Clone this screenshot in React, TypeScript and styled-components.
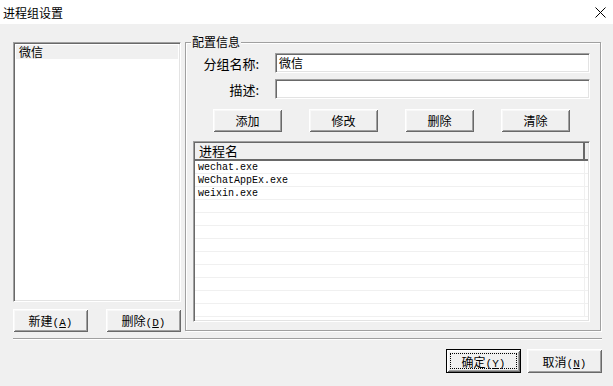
import { FC } from 'react';
import styled, { createGlobalStyle } from 'styled-components';

const GlobalStyle = createGlobalStyle`
  html, body {
    margin: 0;
    padding: 0;
    background: #f0f0f0;
  }
  * {
    box-sizing: border-box;
  }
`;

const Window = styled.div`
  display: flex;
  flex-direction: column;
  width: 613px;
  height: 386px;
  background: #f0f0f0;
  overflow: hidden;

  font-family: 'Noto Sans CJK SC', 'Noto Sans', sans-serif;
  font-size: 12px;
  color: #000;
`;

const TitleBar = styled.div`
  display: flex;
  align-items: center;
  justify-content: space-between;
  height: 24px;
  padding: 0 7px 0 3px;
  background: #fff;

  font-size: 12px;
`;

const Body = styled.div`
  display: flex;
  flex-direction: column;
  padding: 18px 12px 0 13px;
`;

const MainRow = styled.div`
  display: flex;
  flex-direction: row;
  align-items: flex-start;
  gap: 4px;
`;

const LeftColumn = styled.div`
  display: flex;
  flex-direction: column;
  gap: 7px;
  width: 168px;
`;

const ListBox = styled.div`
  display: flex;
  flex-direction: column;
  height: 260px;
  padding: 1px 0 0 0;
  background: #fff;
  border-top: 1px solid #a0a0a0;
  border-left: 1px solid #a0a0a0;
  border-bottom: 1px solid #fff;
  border-right: 1px solid #fff;
  box-shadow: inset 1px 1px #696969, inset -1px -1px #e3e3e3;
`;

const ListItem = styled.div<{ selected?: boolean }>`
  height: 14px;
  margin: 1px 2px 0 2px;
  padding-left: 3px;
  line-height: 14px;
  background: ${(props) => (props.selected ? '#f0f0f0' : 'transparent')};
`;

const ButtonRow = styled.div`
  display: flex;
  justify-content: space-between;
`;

const Button = styled.button<{ w?: number; h?: number; primary?: boolean }>`
  position: relative;
  width: ${(props) => props.w ?? 75}px;
  height: ${(props) => props.h ?? 23}px;
  padding: 0;
  border: ${(props) => (props.primary ? '1px solid #000' : 'none')};
  background: #f0f0f0;
  box-shadow: inset 1px 1px #fff, inset -1px -1px #696969,
    inset 2px 2px #f8f8f8, inset -2px -2px #a0a0a0;

  font-family: 'Noto Sans CJK SC', 'Noto Sans', sans-serif;
  font-size: 12px;
  color: #000;
`;

const FocusRing = styled.span`
  position: absolute;
  inset: 3px;
  border: 1px dotted #000;
  pointer-events: none;
`;

const GroupBox = styled.div`
  position: relative;
  display: flex;
  flex-direction: column;
  width: 416px;
  height: 289px;
  padding: 10px 10px 8px 0;
  border: 1px solid #a0a0a0;
  box-shadow: inset 1px 1px #fff, 1px 1px #fff;
`;

const Legend = styled.span`
  position: absolute;
  top: -8px;
  left: 5px;
  padding: 0 1px;
  background: #f0f0f0;
  line-height: 14px;
`;

const FormGrid = styled.div`
  display: grid;
  grid-template-columns: 73px 1fr;
  column-gap: 16px;
  row-gap: 6px;
  align-items: center;
`;

const Label = styled.span`
  text-align: right;
  font-size: 13px;
`;

const TextInput = styled.div`
  height: 20px;
  padding: 1px 3px;
  background: #fff;
  border-top: 1px solid #a0a0a0;
  border-left: 1px solid #a0a0a0;
  border-bottom: 1px solid #fff;
  border-right: 1px solid #fff;
  box-shadow: inset 1px 1px #696969, inset -1px -1px #e3e3e3;

  line-height: 16px;
`;

const ActionRow = styled.div`
  display: flex;
  gap: 27px;
  margin-top: 10px;
  padding-left: 27px;
`;

const ListView = styled.div`
  display: flex;
  flex-direction: column;
  flex: 1;
  margin: 9px 0 0 7px;
  background: #fff;
  border-top: 1px solid #a0a0a0;
  border-left: 1px solid #a0a0a0;
  border-bottom: 1px solid #fff;
  border-right: 1px solid #fff;
  box-shadow: inset 1px 1px #696969, inset -1px -1px #e3e3e3;
  padding: 1px 1px 0 1px;
  overflow: hidden;
`;

const Header = styled.div`
  display: flex;
  height: 18px;
  background: #f0f0f0;
  border-bottom: 2px solid #696969;
`;

const HeaderCell = styled.div`
  width: 390px;
  padding-left: 4px;
  border-right: 2px solid #696969;
  line-height: 15px;
  font-size: 13px;
`;

const Row = styled.div`
  display: flex;
  height: 13px;
  border-bottom: 1px solid #f0f0f0;
`;

const Cell = styled.div`
  width: 390px;
  padding: 1px 0 0 3px;
  border-right: 1px solid #f0f0f0;

  font-family: 'Liberation Mono', monospace;
  font-size: 10px;
  line-height: 12px;
`;

const Separator = styled.div`
  height: 2px;
  margin-top: 6px;
  margin-right: -1px;
  border-top: 1px solid #a0a0a0;
  border-bottom: 1px solid #fff;
`;

const FooterRow = styled.div`
  display: flex;
  justify-content: flex-end;
  gap: 6px;
  margin-top: 9px;
  margin-right: -1px;
`;

const Mnemonic = styled.span`
  font-family: 'Liberation Mono', monospace;
  font-size: 11px;
`;

const processes = ['wechat.exe', 'WeChatAppEx.exe', 'weixin.exe'];
const rowCount = 12;

const CloseIcon: FC = () => (
  <svg width="11" height="11" viewBox="0 0 11 11">
    <path d="M0.5 0.5 L10.5 10.5 M10.5 0.5 L0.5 10.5" stroke="#000" strokeWidth="1" />
  </svg>
);

const App: FC = () => {
  const rows = Array.from({ length: rowCount }, (_, i) => processes[i] ?? '');

  return (
    <>
      <GlobalStyle />
      <Window>
        <TitleBar>
          <span>进程组设置</span>
          <CloseIcon />
        </TitleBar>
        <Body>
          <MainRow>
            <LeftColumn>
              <ListBox>
                <ListItem selected>微信</ListItem>
              </ListBox>
              <ButtonRow>
                <Button>
                  新建<Mnemonic>(<u>A</u>)</Mnemonic>
                </Button>
                <Button>
                  删除<Mnemonic>(<u>D</u>)</Mnemonic>
                </Button>
              </ButtonRow>
            </LeftColumn>
            <GroupBox>
              <Legend>配置信息</Legend>
              <FormGrid>
                <Label>分组名称:</Label>
                <TextInput>微信</TextInput>
                <Label>描述:</Label>
                <TextInput />
              </FormGrid>
              <ActionRow>
                <Button w={69}>添加</Button>
                <Button w={69}>修改</Button>
                <Button w={69}>删除</Button>
                <Button w={69}>清除</Button>
              </ActionRow>
              <ListView>
                <Header>
                  <HeaderCell>进程名</HeaderCell>
                </Header>
                {rows.map((name, i) => (
                  <Row key={i}>
                    <Cell>{name}</Cell>
                  </Row>
                ))}
              </ListView>
            </GroupBox>
          </MainRow>
          <Separator />
          <FooterRow>
            <Button h={24} primary>
              确定<Mnemonic>(<u>Y</u>)</Mnemonic>
              <FocusRing />
            </Button>
            <Button h={24}>
              取消<Mnemonic>(<u>N</u>)</Mnemonic>
            </Button>
          </FooterRow>
        </Body>
      </Window>
    </>
  );
};

export default App;
